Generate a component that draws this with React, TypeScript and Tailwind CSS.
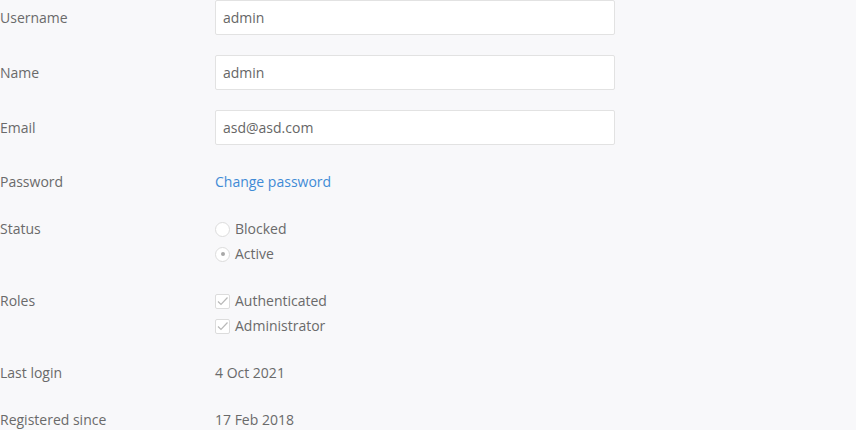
const font = { fontFamily: '"Open Sans", "Noto Sans", sans-serif' };

function Radio({ checked, label }: { checked?: boolean; label: string }) {
  return (
    <div className="flex h-5 items-center gap-[5px]">
      <span className="flex h-[15px] w-[15px] items-center justify-center rounded-full border border-[#dcdcdc] bg-white">
        {checked && <span className="h-[4px] w-[4px] rounded-full bg-[#a8a8a8]" />}
      </span>
      <span>{label}</span>
    </div>
  );
}

function Checkbox({ label }: { label: string }) {
  return (
    <div className="flex h-5 items-center gap-[5px]">
      <span className="flex h-[15px] w-[15px] items-center justify-center rounded-[2px] border border-[#dcdcdc] bg-white">
        <svg width="13" height="13" viewBox="0 0 13 13" fill="none">
          <path d="M2 6.5 L5 9.5 L11.5 2.5" stroke="#b8b8b8" strokeWidth="1.2" />
        </svg>
      </span>
      <span>{label}</span>
    </div>
  );
}

function InputRow({ label, value, className = '' }: { label: string; value: string; className?: string }) {
  return (
    <div className={`flex items-center ${className}`}>
      <div className="w-[215px] shrink-0">{label}</div>
      <input
        readOnly
        value={value}
        className="h-[35px] w-[400px] rounded-[2px] border border-[#e2e2e2] bg-white px-[7px] text-[14px] text-[#666] outline-none"
        style={font}
      />
    </div>
  );
}

function TextRow({ label, children, className = '' }: { label: string; children: React.ReactNode; className?: string }) {
  return (
    <div className={`flex items-start ${className}`}>
      <div className="h-5 w-[215px] shrink-0 leading-5">{label}</div>
      <div className="leading-5">{children}</div>
    </div>
  );
}

export default function App() {
  return (
    <div className="h-[430px] w-[856px] overflow-hidden bg-[#f8f8fa] text-[14px] leading-5 text-[#6a6a6a]" style={font}>
      <InputRow label="Username" value="admin" />
      <InputRow label="Name" value="admin" className="mt-5" />
      <InputRow label="Email" value="asd@asd.com" className="mt-5" />
      <TextRow label="Password" className="mt-[27px]">
        <a href="#" className="text-[#3f8bd6]">Change password</a>
      </TextRow>
      <TextRow label="Status" className="mt-[27px]">
        <div className="flex flex-col gap-[5px]">
          <Radio label="Blocked" />
          <Radio label="Active" checked />
        </div>
      </TextRow>
      <TextRow label="Roles" className="mt-[27px]">
        <div className="flex flex-col gap-[5px]">
          <Checkbox label="Authenticated" />
          <Checkbox label="Administrator" />
        </div>
      </TextRow>
      <TextRow label="Last login" className="mt-[27px]">
        4 Oct 2021
      </TextRow>
      <TextRow label="Registered since" className="mt-[27px]">
        17 Feb 2018
      </TextRow>
    </div>
  );
}
